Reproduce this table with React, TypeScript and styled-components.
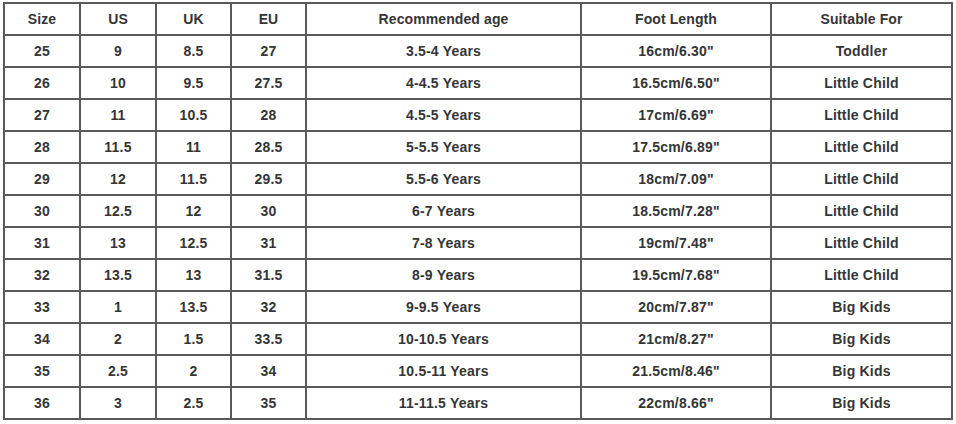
import React from 'react';
import styled, { createGlobalStyle } from 'styled-components';

const GlobalStyle = createGlobalStyle`
  html, body {
    margin: 0;
    padding: 0;
    background: #ffffff;
  }
  body {
    font-family: "Liberation Sans", Arial, sans-serif;
  }
`;

const columns = ['Size', 'US', 'UK', 'EU', 'Recommended age', 'Foot Length', 'Suitable For'];

const rows: string[][] = [
  ['25', '9', '8.5', '27', '3.5-4 Years', '16cm/6.30"', 'Toddler'],
  ['26', '10', '9.5', '27.5', '4-4.5 Years', '16.5cm/6.50"', 'Little Child'],
  ['27', '11', '10.5', '28', '4.5-5 Years', '17cm/6.69"', 'Little Child'],
  ['28', '11.5', '11', '28.5', '5-5.5 Years', '17.5cm/6.89"', 'Little Child'],
  ['29', '12', '11.5', '29.5', '5.5-6 Years', '18cm/7.09"', 'Little Child'],
  ['30', '12.5', '12', '30', '6-7 Years', '18.5cm/7.28"', 'Little Child'],
  ['31', '13', '12.5', '31', '7-8 Years', '19cm/7.48"', 'Little Child'],
  ['32', '13.5', '13', '31.5', '8-9 Years', '19.5cm/7.68"', 'Little Child'],
  ['33', '1', '13.5', '32', '9-9.5 Years', '20cm/7.87"', 'Big Kids'],
  ['34', '2', '1.5', '33.5', '10-10.5 Years', '21cm/8.27"', 'Big Kids'],
  ['35', '2.5', '2', '34', '10.5-11 Years', '21.5cm/8.46"', 'Big Kids'],
  ['36', '3', '2.5', '35', '11-11.5 Years', '22cm/8.66"', 'Big Kids'],
];

const Page = styled.div`
  padding: 2px 0 0 3px;
`;

const SizeGrid = styled.div`
  display: grid;
  grid-template-columns: 74px 74px 73px 73px 273px 188px 179px;
  grid-auto-rows: 30px;
  gap: 2px;
  padding: 2px;
  width: max-content;
  background: #5a5a5a;
`;

const Cell = styled.div<{ $head?: boolean }>`
  display: flex;
  align-items: center;
  justify-content: center;
  background: #ffffff;
  color: #353535;
  font-size: 14px;
  font-weight: 700;
  letter-spacing: ${(p) => (p.$head ? '0.1px' : '0.2px')};
  white-space: nowrap;
`;

export default function App() {
  return (
    <Page>
      <GlobalStyle />
      <SizeGrid>
        {columns.map((c) => (
          <Cell key={c} $head>
            {c}
          </Cell>
        ))}
        {rows.map((r) =>
          r.map((v, i) => <Cell key={r[0] + '-' + i}>{v}</Cell>)
        )}
      </SizeGrid>
    </Page>
  );
}
